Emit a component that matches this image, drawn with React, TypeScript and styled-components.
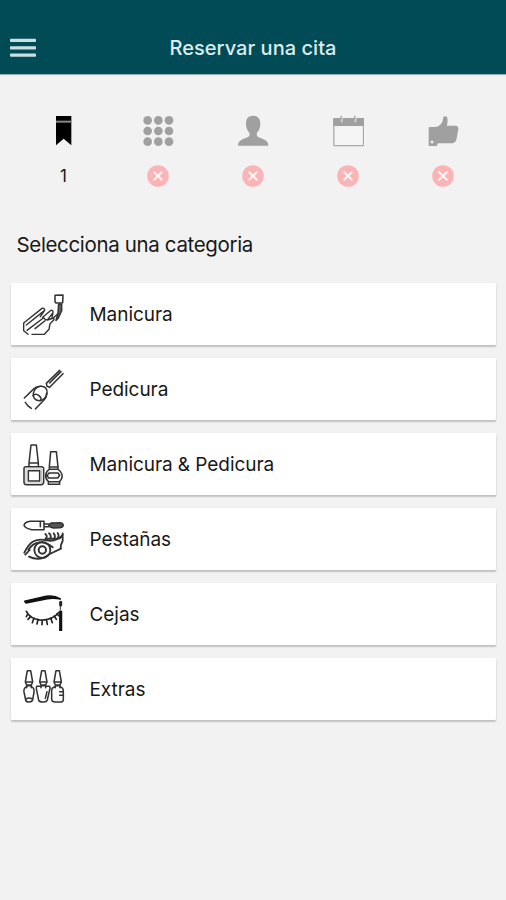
import React from 'react';
import styled, { createGlobalStyle } from 'styled-components';

const GlobalStyle = createGlobalStyle`
  * { box-sizing: border-box; }
  body {
    margin: 0;
    background: #f2f2f2;
    font-family: Inter, "Liberation Sans", sans-serif;
    color: #181818;
  }
`;

const Screen = styled.main`
  width: 506px;
  height: 900px;
  background: #f2f2f2;
  overflow: hidden;
`;

const Header = styled.header`
  height: 74px;
  padding: 21px 10px 0;
  display: grid;
  grid-template-columns: 26px 1fr 26px;
  align-items: center;
  background: #004b55;
  box-shadow: 0 1px 1px rgba(0, 55, 62, 0.35);
`;

const MenuButton = styled.button`
  display: flex;
  width: 26px;
  padding: 0;
  border: 0;
  background: none;
`;

const MenuIcon = styled.svg`
  width: 26px;
  height: 20px;
  fill: #c9dfe2;
`;

const Title = styled.h1`
  margin: 0;
  text-align: center;
  font-size: 20px;
  line-height: 24px;
  font-weight: 500;
  letter-spacing: 0.04px;
  color: #dcebed;
`;

const Steps = styled.nav`
  display: grid;
  grid-template-columns: repeat(5, 1fr);
  padding: 41px 16px 0;
`;

const Step = styled.div`
  display: flex;
  flex-direction: column;
  align-items: center;
  gap: 18px;
`;

const StepIcon = styled.svg`
  width: 32px;
  height: 32px;
  fill: #a0a0a0;
`;

const StepStatus = styled.div`
  height: 22px;
  display: flex;
  align-items: center;
  font-size: 17px;
  line-height: 22px;
`;

const CrossIcon = styled.svg`
  width: 22px;
  height: 22px;
`;

const Heading = styled.h2`
  margin: 45px 0 0 16.5px;
  font-size: 20.5px;
  line-height: 26px;
  font-weight: 400;
  letter-spacing: -0.35px;
`;

const CategoryList = styled.div`
  display: flex;
  flex-direction: column;
  gap: 13.1px;
  padding: 25px 10px 0 11px;
`;

const Category = styled.button`
  display: flex;
  align-items: center;
  gap: 23.5px;
  height: 62px;
  padding: 2px 11px 0;
  border: 0;
  border-radius: 1px;
  background: #fff;
  box-shadow: 0 2px 1.5px rgba(0, 0, 0, 0.16), 0 1px 3px rgba(0, 0, 0, 0.08);
  font: 400 19px/24px Inter, "Liberation Sans", sans-serif;
  letter-spacing: -0.06px;
  color: #181818;
  text-align: left;
`;

const CategoryIcon = styled.svg`
  width: 44px;
  height: 44px;
  fill: none;
  stroke: #333;
  stroke-width: 4.6;
  stroke-linecap: round;
  stroke-linejoin: round;
`;

const Cross = () => (
  <CrossIcon viewBox="0 0 22 22">
    <circle cx="11" cy="11" r="10.8" fill="#fbb4b5" />
    <path d="M6.7 6.7l8.6 8.6M15.3 6.7l-8.6 8.6" stroke="#fff5f5" strokeWidth="2" />
  </CrossIcon>
);

const BookmarkIcon = () => (
  <StepIcon viewBox="51 45 96 96">
    <path d="M78 48h46v88l-23-20-23 20z" fill="#000" />
    <path d="M78 65h46" stroke="#888" strokeWidth="6" />
  </StepIcon>
);

const GridIcon = () => (
  <StepIcon viewBox="337 45 96 96">
    {[61, 93, 125].map((y) =>
      [354, 386, 418].map((x) => <circle key={`${x}-${y}`} cx={x} cy={y} r="13" />),
    )}
  </StepIcon>
);

const PersonIcon = () => (
  <StepIcon viewBox="51 45 96 96">
    <path d="M99 47C85 47 78 56 78 70C78 84 82 92 88 98C90 108 88 110 80 113C65 118 54 122 54 137H145C145 122 133 118 119 113C111 110 109 108 111 98C117 92 121 84 121 70C121 56 113 47 99 47Z" />
  </StepIcon>
);

const CalendarIcon = () => (
  <StepIcon viewBox="335 45 96 96">
    <rect x="340.5" y="56" width="89" height="81" fill="#f5f5f5" stroke="#aaa" strokeWidth="4" rx="2" />
    <path d="M339 54h92v24h-92z" />
    <path d="M364 50v14M405 50v14" stroke="#dedede" strokeWidth="6" strokeLinecap="round" />
    <path d="M362 49v12M403 49v12" stroke="#a0a0a0" strokeWidth="3.5" strokeLinecap="round" />
  </StepIcon>
);

const ThumbIcon = () => (
  <StepIcon viewBox="620 45 96 96">
    <path d="M627 81H643C656 80 664 72 667 62L669 52Q672 46 679 50C684 56 681 69 680 77H706Q715 78 714 87L709 115Q707 129 696 130H653L649 138H625V84Z" />
    <circle cx="635" cy="126" r="4.5" fill="#eee" />
  </StepIcon>
);

const ManicureIcon = () => (
  <CategoryIcon viewBox="36 36 132 132">
    <path d="M135 43l24-1-1 23-20 1-3-4z" />
    <path d="M146 69h9v20l-10 22-7 7 6-22z" fill="#666" />
    <path d="M41 126V149L54 160M41 126L96 82Q104 80 104 88L49 132M51 148L100 111M104 88L91 107M98 109L123 88Q130 87 129 95L113 116L105 115M129 95L126 110M108 117L75 143M112 117L131 111L132 116L120 128M120 128L117 145L103 160H66M98 109L104 113M129 112L143 99" strokeWidth="4.2" />
  </CategoryIcon>
);

const PedicureIcon = () => (
  <CategoryIcon viewBox="36 36 132 132">
    <path d="M109 82L149 43M119 94L159 53M109 82L111 91L119 94M119 81L153 47" />
    <path d="M91 91C105 89 113 100 111 112C109 127 97 134 87 134C75 133 68 124 70 113C72 101 81 93 91 91Z" />
    <path d="M43 126L72 98Q79 91 91 91M110 111Q110 124 102 132L76 159M46 139L53 149L64 157M69 119Q77 110 87 119T91 133" />
  </CategoryIcon>
);

const PolishDuoIcon = () => (
  <CategoryIcon viewBox="36 36 132 132">
    <path d="M49 114h46v42H49z" stroke="#bbb" strokeWidth="3" />
    <path d="M63 42h16l6 54v11H57V96zM58 96h26M57 107H48q-6 0-6 6v40q0 8 7 8h44q8 0 8-8v-40q0-6-7-6H85" />
    <rect x="55" y="119" width="34" height="31" />
    <path d="M122 62h17l5 45v8h-26v-8zM119 108h24M118 115Q108 121 107 132Q106 144 115 151V160H149V151Q158 143 156 131Q154 121 144 115M117 126h27l5 7-6 8h-27l-5-7zM115 152h34" />
  </CategoryIcon>
);

const LashesIcon = () => (
  <CategoryIcon viewBox="36 36 132 132">
    <path d="M102 46H61Q44 48 42 58Q46 68 65 71H102ZM91 47V62M103 54H116M103 62H116" />
    <path d="M116 58Q121 49 132 51L150 50Q158 50 160 58Q158 65 149 65L131 66Q120 65 116 58Z" fill="#555" />
    <path d="M43 140C59 105 79 96 110 103Q139 109 158 87M55 131C73 104 102 103 128 124M46 146L59 132M57 152Q90 168 119 144L153 128Q150 120 158 105V88" strokeWidth="5.5" />
    <circle cx="97" cy="132" r="24" strokeWidth="5.5" />
    <circle cx="97" cy="132" r="11" strokeWidth="6" />
    <path d="M106 99Q115 92 106 84M117 101Q128 91 117 82M130 101Q139 91 131 82M140 99Q150 91 143 81M148 96Q159 91 158 82M106 99L150 97" strokeWidth="5.5" />
  </CategoryIcon>
);

const BrowIcon = () => (
  <CategoryIcon viewBox="36 36 132 132">
    <path d="M44 61L109 46Q132 42 151 54Q132 50 112 53L48 66Z" fill="#111" stroke="#111" />
    <path d="M152 64v8" stroke="#222" strokeWidth="9" />
    <path d="M152 89v61" stroke="#111" strokeWidth="9.5" strokeLinecap="butt" />
    <path d="M151 76v11" strokeWidth="3" />
    <path d="M49 91Q60 113 90 117Q127 119 147 94M54 98L49 107M62 106L54 115M72 111L67 125M84 115L81 129M97 117L96 131M109 115L112 130M122 111L127 125M133 105L139 115M141 98L146 104" stroke="#222" strokeWidth="5" />
  </CategoryIcon>
);

const PolishTrioIcon = () => (
  <CategoryIcon viewBox="36 36 132 132">
    {[57, 100, 143].map((x) => (
      <path key={x} d={`M${x - 5} 44h10l6 34-4 9h-14l-4-9zM${x - 10} 78h20M${x - 7} 87v8M${x + 7} 87v8M${x - 6} 89h12`} />
    ))}
    <path d="M50 92Q40 97 42 108L47 132Q48 138 56 138Q66 138 68 132L72 108Q74 97 64 92M48 129Q57 123 67 129" />
    <path d="M93 91H80Q78 94 80 103L86 132Q88 139 101 138Q110 138 112 132L119 101Q122 94 118 91H107M111 107l-5 20" />
    <path d="M136 92Q124 94 125 105V131Q126 138 136 138H151Q160 138 160 131V105Q160 95 150 92M158 107h-9M149 118h9" />
  </CategoryIcon>
);

const steps = [BookmarkIcon, GridIcon, PersonIcon, CalendarIcon, ThumbIcon];

const categories = [
  { name: 'Manicura', Icon: ManicureIcon },
  { name: 'Pedicura', Icon: PedicureIcon },
  { name: 'Manicura & Pedicura', Icon: PolishDuoIcon },
  { name: 'Pestañas', Icon: LashesIcon },
  { name: 'Cejas', Icon: BrowIcon },
  { name: 'Extras', Icon: PolishTrioIcon },
];

export default function App() {
  return (
    <Screen>
      <GlobalStyle />
      <Header>
        <MenuButton aria-label="Menú">
          <MenuIcon viewBox="0 0 26 20">
            <rect y="0.8" width="26" height="3.2" rx="0.8" />
            <rect y="8.3" width="26" height="3.2" rx="0.8" />
            <rect y="15.6" width="26" height="3.2" rx="0.8" />
          </MenuIcon>
        </MenuButton>
        <Title>Reservar una cita</Title>
      </Header>
      <Steps>
        {steps.map((Icon, index) => (
          <Step key={index}>
            <Icon />
            <StepStatus>{index === 0 ? '1' : <Cross />}</StepStatus>
          </Step>
        ))}
      </Steps>
      <Heading>Selecciona una categoria</Heading>
      <CategoryList>
        {categories.map(({ name, Icon }) => (
          <Category key={name}>
            <Icon />
            {name}
          </Category>
        ))}
      </CategoryList>
    </Screen>
  );
}
